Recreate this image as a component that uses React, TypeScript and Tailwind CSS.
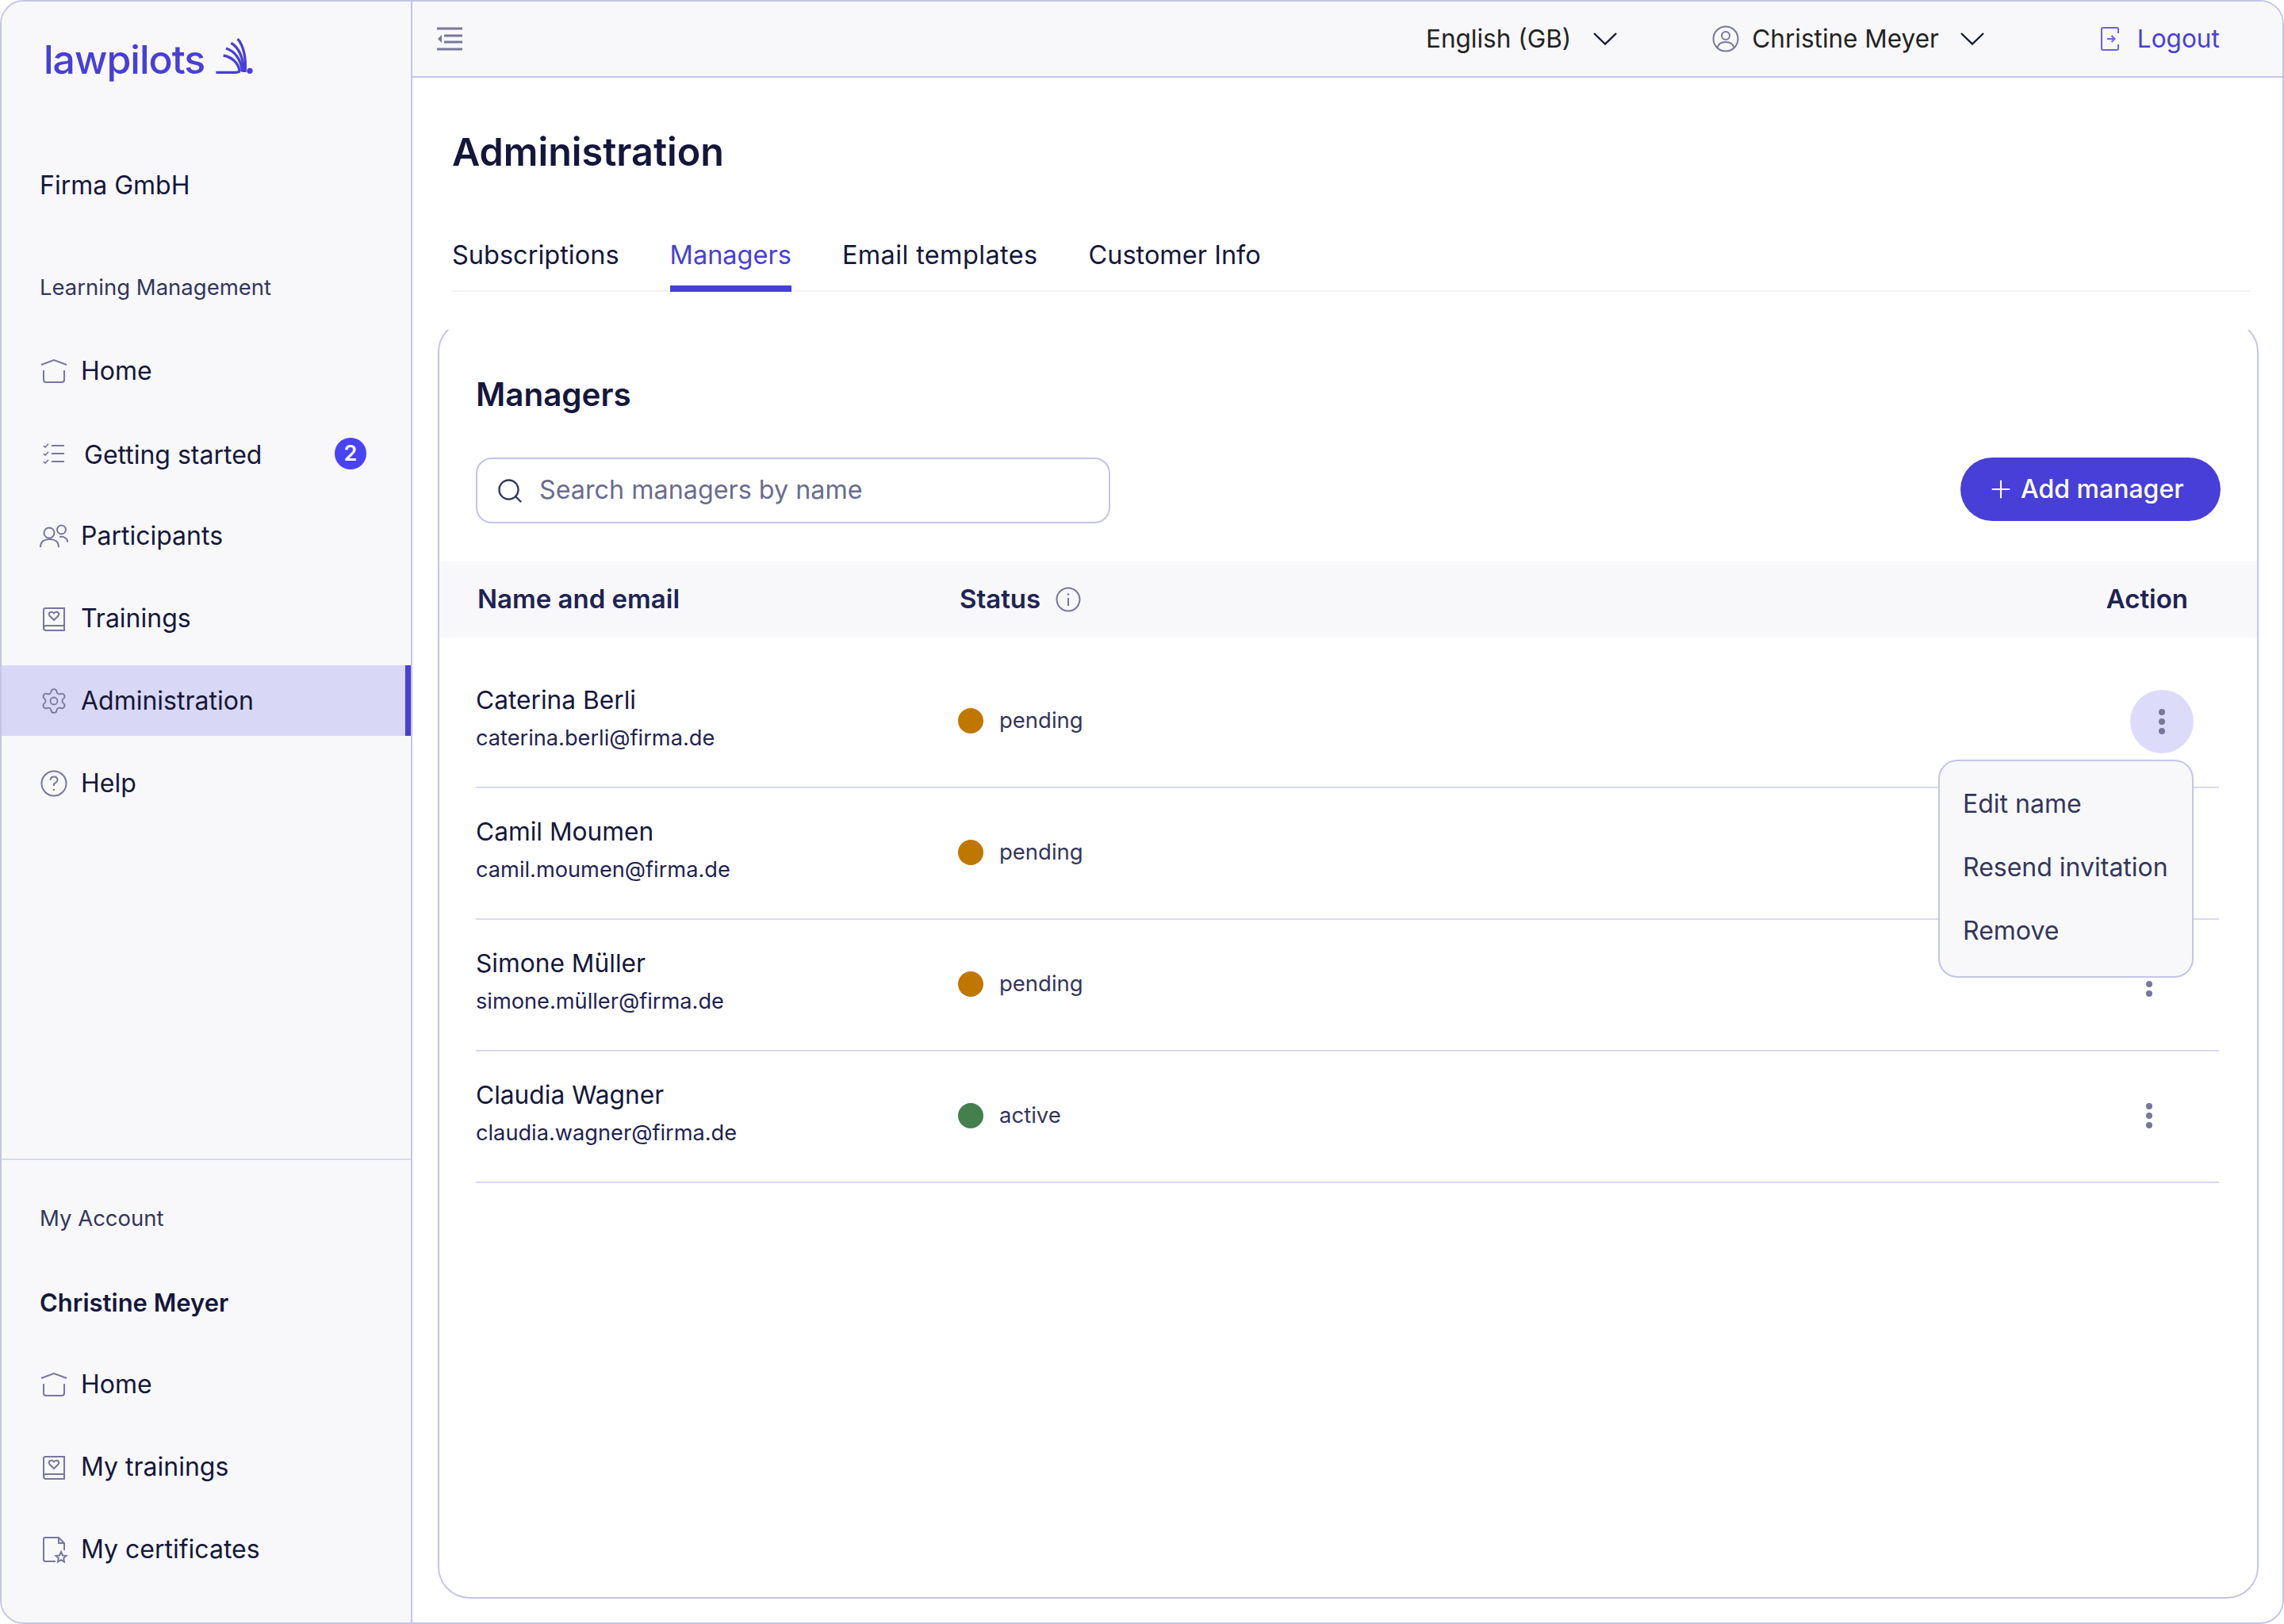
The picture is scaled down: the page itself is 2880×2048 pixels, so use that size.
import { Search, Plus, Settings } from "lucide-react";
import type { ReactNode } from "react";

const ic = "#77789a";

function LogoMark() {
  return (
    <svg width="70" height="60" viewBox="0 0 210 180" fill="none" stroke="#473fd8" strokeWidth="10" className="relative -top-[4px] ml-[1px]">
      <path d="M40 151H108Q124 151 130 146" />
      <path d="M68 87C100 92 125 115 130 148" />
      <path d="M78 60C110 70 135 100 140 148" />
      <path d="M97 40C125 55 145 95 145 150" />
      <path d="M122 24C145 50 155 100 150 150" />
      <circle cx="168" cy="145" r="11" fill="#473fd8" stroke="none" />
    </svg>
  );
}

function Chevron() {
  return (
    <svg width="30" height="16" viewBox="0 0 30 16" fill="none" stroke="#15173a" strokeWidth="2.4">
      <path d="M1 1L15 14.500L29 1" />
    </svg>
  );
}

function HomeIcon() {
  return (
    <svg width="36" height="32" viewBox="0 0 36 32" fill="none" stroke={ic} strokeWidth="2">
      <path d="M2 8L18 2L34 8" />
      <path d="M5 15V27Q5 30 8 30H28Q31 30 31 27V15" />
    </svg>
  );
}

function ChecklistIcon() {
  return (
    <svg width="36" height="32" viewBox="0 0 36 32" fill="none" stroke={ic} strokeWidth="2">
      <path d="M15 6H31M15 16H31M15 26H31" />
      <path d="M5 6L7 8L11 4M5 16L7 18L11 14M5 26L7 28L11 24" strokeWidth="1.7" />
    </svg>
  );
}

function PeopleIcon() {
  return (
    <svg width="36" height="32" viewBox="0 0 36 32" fill="none" stroke={ic} strokeWidth="2">
      <circle cx="12" cy="12" r="6.500" />
      <path d="M1 30C1 23 6 20 12.500 20C19 20 24 23 24 30" />
      <circle cx="27.500" cy="8" r="5.500" />
      <path d="M25 17C31 16 35 19 35.500 24" />
    </svg>
  );
}

function BookIcon() {
  return (
    <svg width="36" height="32" viewBox="0 0 36 32" fill="none" stroke={ic} strokeWidth="2">
      <path d="M31 25H8Q5 25 5 28V5Q5 3 7 3H31V31H8Q5 31 5 28" />
      <path d="M18 18L12.500 12.500Q10.500 9.500 13.500 8Q16 7 18 9.500Q20 7 22.500 8Q25.500 9.500 23.500 12.500Z" />
    </svg>
  );
}

function HelpIcon() {
  return (
    <svg width="36" height="36" viewBox="0 0 36 36" fill="none" stroke={ic} strokeWidth="2">
      <circle cx="18" cy="18" r="15.500" />
      <path d="M13.500 14Q14 9.500 18 9.500Q22.500 9.500 22.500 13.500Q22.500 16 18 18.500V21" />
      <circle cx="18" cy="26" r="1.200" fill={ic} stroke="none" />
    </svg>
  );
}

function CertIcon() {
  return (
    <svg width="36" height="36" viewBox="0 0 36 36" fill="none" stroke={ic} strokeWidth="2">
      <path d="M20 33H7Q5 33 5 31V5Q5 3 7 3H24L31 10V19" />
      <path d="M24 3V10H31" />
      <path d="M27 21L29 25.500L33.500 26L30.200 29L31 33.500L27 31.200L23 33.500L23.800 29L20.500 26L25 25.500Z" />
    </svg>
  );
}

function UserIcon() {
  return (
    <svg width="34" height="34" viewBox="0 0 34 34" fill="none" stroke={ic} strokeWidth="2">
      <circle cx="17" cy="17" r="15.500" />
      <circle cx="17" cy="13" r="5" />
      <path d="M6.500 28C8 22 12 21 17 21C22 21 26 22 27.500 28" />
    </svg>
  );
}

function LogoutIcon() {
  return (
    <svg width="28" height="32" viewBox="0 0 28 32" fill="none" stroke="#6a5ff0" strokeWidth="2">
      <path d="M24 9V4Q24 2 22 2H5Q3 2 3 4V28Q3 30 5 30H22Q24 30 24 28V23" />
      <path d="M10 16H19M15.500 12L19.500 16L15.500 20" />
    </svg>
  );
}

function MenuIcon() {
  return (
    <svg width="34" height="30" viewBox="0 0 34 30" fill="none" stroke={ic} strokeWidth="3">
      <path d="M1 2H33M10 11H33M10 19H33M1 28H33" />
      <path d="M7 10L2 15L7 20Z" fill={ic} stroke="none" />
    </svg>
  );
}

function InfoIcon() {
  return (
    <svg width="32" height="32" viewBox="0 0 32 32" fill="none" stroke={ic} strokeWidth="2">
      <circle cx="16" cy="16" r="14.500" />
      <path d="M16 14V24" />
      <circle cx="16" cy="9.500" r="1.300" fill={ic} stroke="none" />
    </svg>
  );
}

function Dots() {
  return (
    <div className="flex flex-col gap-[4px]">
      <span className="size-[8px] rounded-full bg-[#77789a]" />
      <span className="size-[8px] rounded-full bg-[#77789a]" />
      <span className="size-[8px] rounded-full bg-[#77789a]" />
    </div>
  );
}

function NavItem({ icon, label, active, badge, wide }: { icon: ReactNode; label: string; active?: boolean; badge?: string; wide?: boolean }) {
  return (
    <div className={`relative flex h-[89px] items-center pl-[48px] text-[32px] text-[#15173a] ${active ? "bg-[#d8d8f6]" : ""}`}>
      <span className="flex w-[36px] justify-center">{icon}</span>
      <span className={wide ? "ml-[20px] mt-[5px]" : "ml-[16px]"}>{label}</span>
      {badge && (
        <span className="absolute left-[420px] top-[25px] flex size-[40px] items-center justify-center rounded-full bg-[#4a42f5] text-[27px] font-semibold text-white">
          {badge}
        </span>
      )}
      {active && <span className="absolute bottom-0 right-0 top-0 w-[7px] bg-[#473fd8]" />}
    </div>
  );
}

const managers = [
  { name: "Caterina Berli", email: "caterina.berli@firma.de", status: "pending" },
  { name: "Camil Moumen", email: "camil.moumen@firma.de", status: "pending" },
  { name: "Simone Müller", email: "simone.müller@firma.de", status: "pending" },
  { name: "Claudia Wagner", email: "claudia.wagner@firma.de", status: "active" },
];

export default function App() {
  return (
    <div className="flex h-[2048px] w-[2880px] overflow-hidden rounded-[30px] border-2 border-[#c4c5e4] bg-white font-['Inter',sans-serif] text-[#15173a]">
      <aside className="flex w-[518px] shrink-0 flex-col border-r-2 border-[#c4c5e4] bg-[#f8f8fb]">
        <div className="flex h-[1461px] flex-col border-b-2 border-[#d8d8f6]">
          <div className="ml-[53px] mt-[43px] flex h-[60px] items-center">
            <span className="text-[50px] font-medium leading-none tracking-[-1px] text-[#473fd8]">lawpilots</span>
            <LogoMark />
          </div>
          <p className="ml-[48px] mt-[107px] text-[32px] leading-[44px]">Firma GmbH</p>
          <p className="ml-[48px] mt-[86px] text-[27.500px] leading-[40px] text-[#33365a]">Learning Management</p>
          <nav className="mt-[41px] flex flex-col gap-[15px]">
            <NavItem icon={<HomeIcon />} label="Home" />
            <NavItem icon={<ChecklistIcon />} label="Getting started" badge="2" wide />
            <NavItem icon={<PeopleIcon />} label="Participants" />
            <NavItem icon={<BookIcon />} label="Trainings" />
            <NavItem icon={<Settings size={36} strokeWidth={1.2} color={ic} />} label="Administration" active />
            <NavItem icon={<HelpIcon />} label="Help" />
          </nav>
        </div>
        <p className="ml-[48px] mt-[53px] text-[27.500px] leading-[40px] text-[#33365a]">My Account</p>
        <p className="ml-[48px] mt-[65px] text-[31px] font-semibold leading-[44px]">Christine Meyer</p>
        <nav className="mt-[36px] flex flex-col gap-[15px]">
          <NavItem icon={<HomeIcon />} label="Home" />
          <NavItem icon={<BookIcon />} label="My trainings" />
          <NavItem icon={<CertIcon />} label="My certificates" />
        </nav>
      </aside>

      <main className="flex min-w-0 flex-1 flex-col">
        <header className="flex h-[96px] shrink-0 items-center border-b-2 border-[#c4c5e4] bg-[#f8f8fb] pl-[30px] text-[31.500px] text-[#222]">
          <MenuIcon />
          <span className="ml-[1214px]">English (GB)</span>
          <span className="ml-[28px]"><Chevron /></span>
          <span className="ml-[120px]"><UserIcon /></span>
          <span className="ml-[16px]">Christine Meyer</span>
          <span className="ml-[27px]"><Chevron /></span>
          <span className="ml-[145px]"><LogoutIcon /></span>
          <span className="ml-[20px] text-[#473fd8]">Logout</span>
        </header>

        <div className="flex flex-1 flex-col pl-[50px] pr-[30px]">
          <h1 className="mt-[62px] text-[48.500px] font-semibold leading-[64px]">Administration</h1>
          <div className="mr-[10px] mt-[70px] flex h-[74px] gap-[64px] border-b-2 border-[#f1f1fb] text-[32.500px]">
            <span className="pt-[4px]">Subscriptions</span>
            <span className="-mb-[2px] border-b-[8px] border-[#473fd8] pt-[4px] text-[#473fd8]">Managers</span>
            <span className="pt-[4px] tracking-[0.35px]">Email templates</span>
            <span className="pt-[4px]">Customer Info</span>
          </div>

          <div className="-ml-[18px] mt-[48px] h-[1600px] overflow-hidden">
            <div className="relative -mt-[12px] h-[1612px] rounded-[40px] border-2 border-[#c4c5e4]">
              <h2 className="ml-[46px] mt-[66px] text-[40.400px] font-semibold leading-[52px]">Managers</h2>
              <div className="mt-[53px] flex items-start justify-between pl-[46px] pr-[46px]">
                <div className="flex h-[83px] w-[800px] items-center gap-[19px] rounded-[20px] border-2 border-[#c4c5e4] pl-[23px] text-[32.300px] text-[#6b6c8e]">
                  <Search size={36} strokeWidth={1.6} color="#33365a" />
                  <span>Search managers by name</span>
                </div>
                <div className="flex h-[80px] w-[328px] items-center gap-[7px] rounded-full bg-[#473fd8] pl-[33px] text-[32px] font-medium text-white">
                  <Plus size={36} strokeWidth={1.4} />
                  <span>Add manager</span>
                </div>
              </div>

              <div className="mt-[48px] flex h-[96px] items-center bg-[#f8f8fb] pl-[48px] pr-[87px] text-[33px] font-semibold text-[#1f2352]">
                <span className="w-[608px]">Name and email</span>
                <span>Status</span>
                <span className="ml-[19px]"><InfoIcon /></span>
                <span className="ml-auto">Action</span>
              </div>

              <div className="ml-[46px] mr-[48px] pt-[24px]">
                {managers.map((m, i) => (
                  <div key={m.email} className="flex h-[166px] items-center border-b-2 border-[#d8d8f6] pb-[6px]">
                    <div className="w-[608px]">
                      <p className="text-[31.700px] leading-[44px]">{m.name}</p>
                      <p className="mt-[4px] text-[27.200px] leading-[44px] text-[#1f2352]">{m.email}</p>
                    </div>
                    <span className={`mt-[4px] size-[32px] rounded-full ${m.status === "active" ? "bg-[#44804d]" : "bg-[#c07700]"}`} />
                    <span className="ml-[20px] mt-[4px] text-[27.500px] text-[#33365a]">{m.status}</span>
                    <div className="ml-auto mr-[84px] mt-[4px]">{i > 0 && <Dots />}</div>
                  </div>
                ))}
              </div>

              {/* open row menu */}
              <div className="absolute left-[2132px] top-[464px] flex size-[80px] items-center justify-center rounded-full bg-[#dcdcfa]">
                <Dots />
              </div>
              <div className="absolute left-[1890px] top-[552px] h-[275px] w-[322px] rounded-[24px] border-2 border-[#c4c5e4] bg-[#f8f8fb] pl-[29px] pt-[32px] text-[32px] leading-[44px] text-[#33365a]">
                <p>Edit name</p>
                <p className="mt-[36px]">Resend invitation</p>
                <p className="mt-[36px]">Remove</p>
              </div>
            </div>
          </div>
        </div>
      </main>
    </div>
  );
}
